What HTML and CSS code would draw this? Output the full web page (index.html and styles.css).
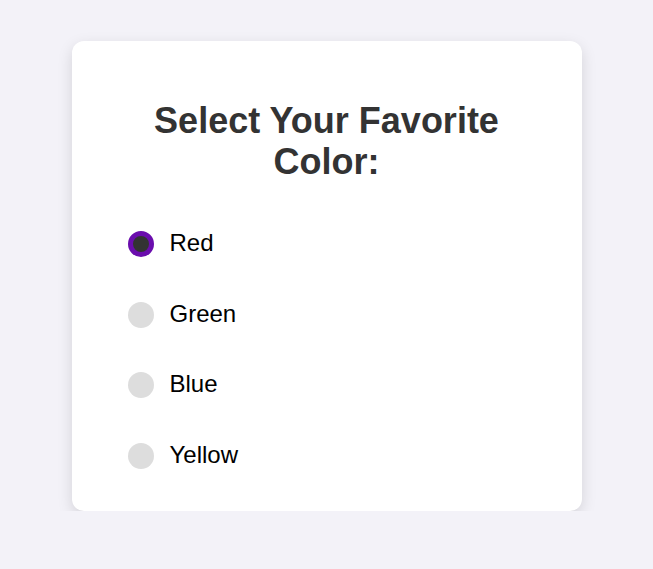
FILE: index.html
```html
<!DOCTYPE html>
<html lang="en">
<head>
<meta charset="utf-8">
<title>Select Your Favorite Color</title>
<link rel="stylesheet" href="styles.css">
</head>
<body>
  <main class="card">
    <h1 class="title">Select Your Favorite Color:</h1>
    <form class="options">
      <label class="option"><input type="radio" name="color" value="red" checked><span>Red</span></label>
      <label class="option"><input type="radio" name="color" value="green"><span>Green</span></label>
      <label class="option"><input type="radio" name="color" value="blue"><span>Blue</span></label>
      <label class="option"><input type="radio" name="color" value="yellow"><span>Yellow</span></label>
    </form>
  </main>
</body>
</html>
```

FILE: styles.css
```css
html, body {
  margin: 0;
  padding: 0;
}

body {
  background: #f3f2f8;
  font-family: "Liberation Sans", Arial, sans-serif;
  padding-top: 41px;
}

.card {
  box-sizing: border-box;
  width: 510px;
  margin: 0 auto;
  background: #ffffff;
  border-radius: 12px;
  box-shadow: 0 5px 15px rgba(0, 0, 0, 0.13);
  padding: 59px 40px 42px;
}

.title {
  margin: 0;
  font-size: 36px;
  line-height: 41px;
  font-weight: bold;
  color: #333333;
  text-align: center;
}

.options {
  display: flex;
  flex-direction: column;
  gap: 42.67px;
  margin-top: 47px;
  padding: 0 16px;
}

.option {
  display: flex;
  align-items: center;
  gap: 16px;
  font-size: 24px;
  line-height: 28px;
  color: #000000;
  cursor: pointer;
}

.option input {
  appearance: none;
  -webkit-appearance: none;
  box-sizing: border-box;
  width: 26px;
  height: 26px;
  margin: 2px 0 0 0;
  border-radius: 50%;
  background: #dddddd;
  flex: none;
  cursor: pointer;
}

.option input:checked {
  background: #333333;
  border: 5px solid #6a0dad;
}
```
